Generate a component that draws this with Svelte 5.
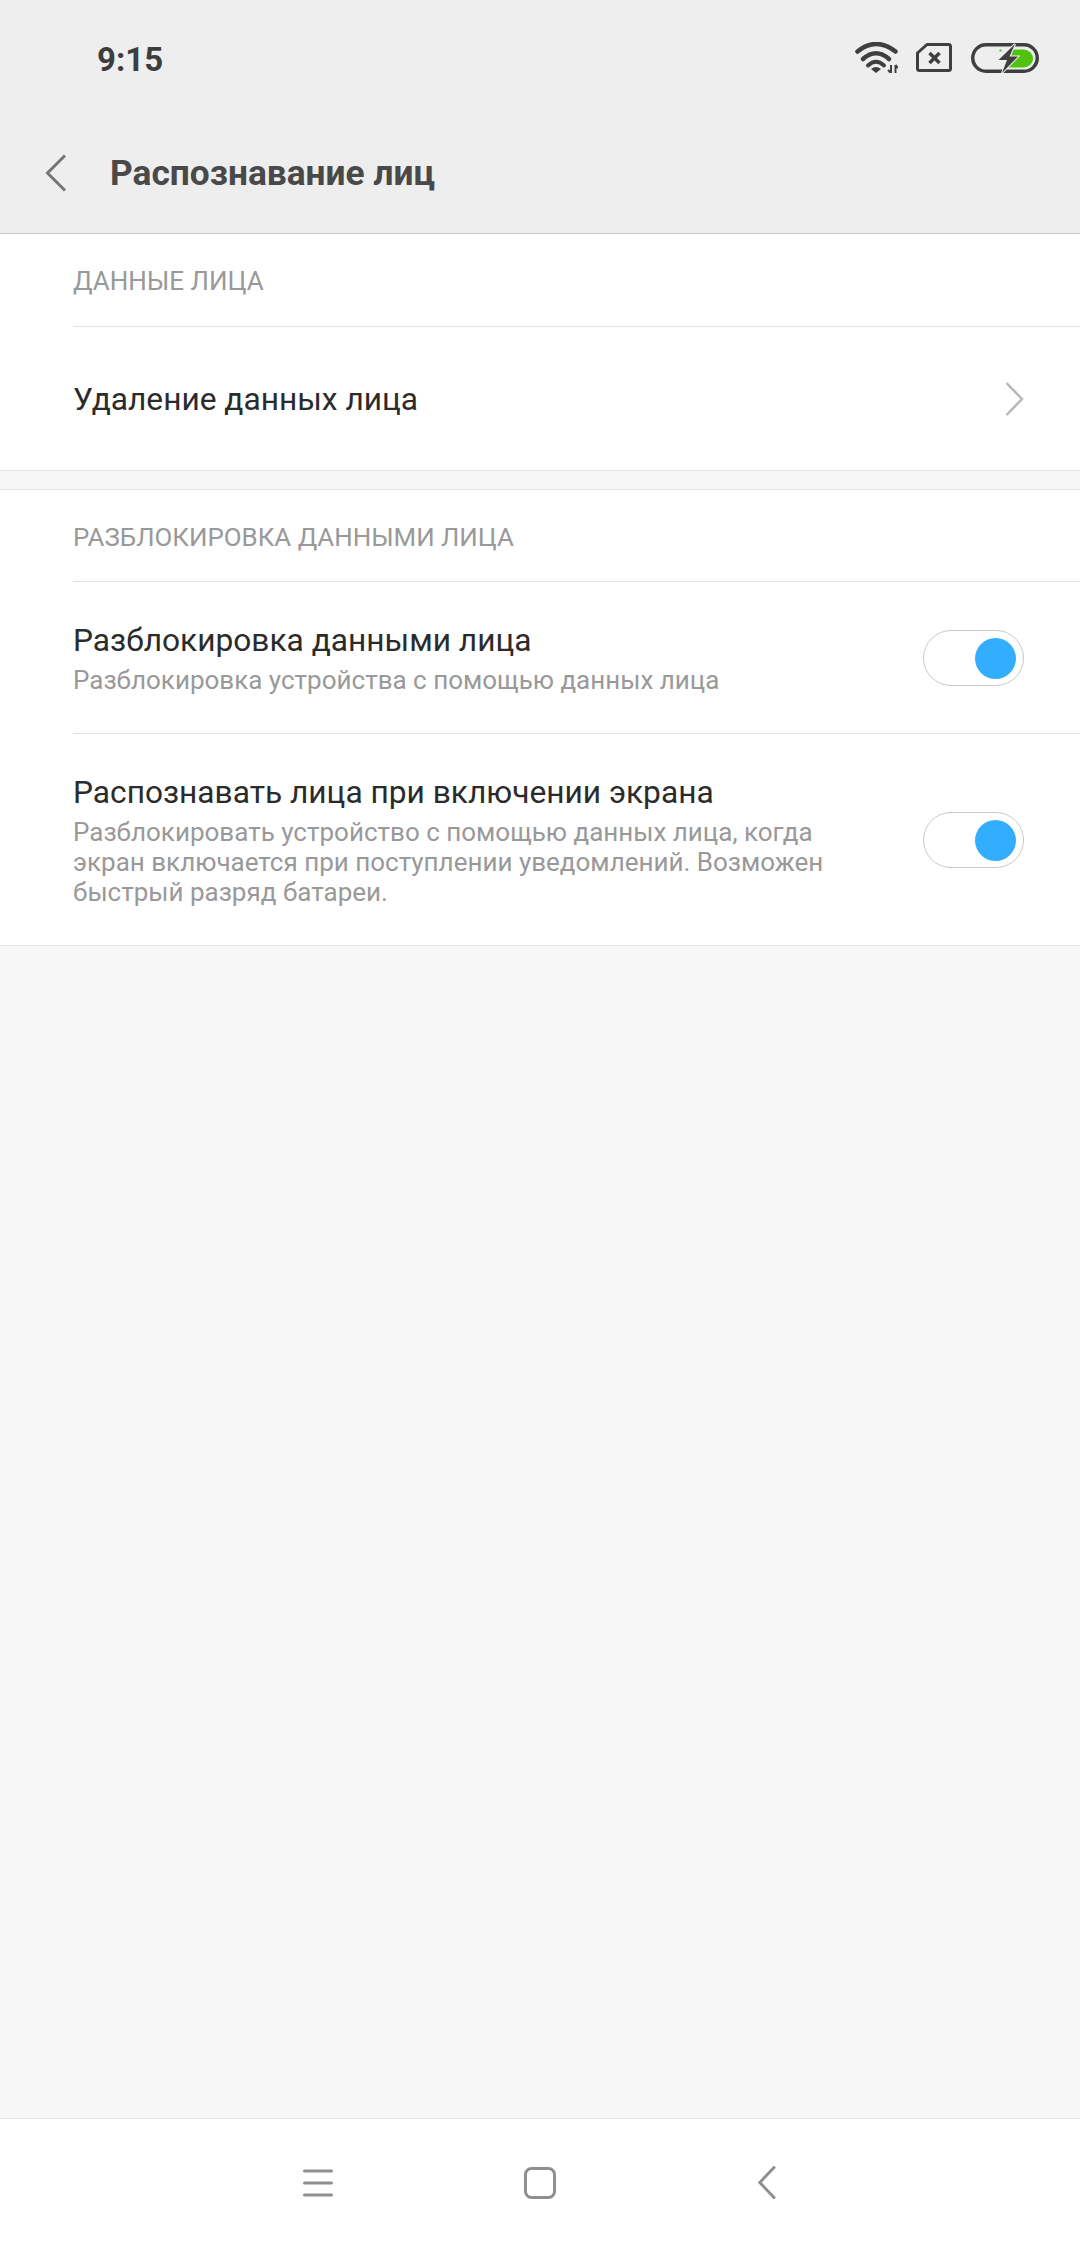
<script>
	const rows = [
		{
			title: 'Разблокировка данными лица',
			lines: ['Разблокировка устройства с помощью данных лица']
		},
		{
			title: 'Распознавать лица при включении экрана',
			lines: [
				'Разблокировать устройство с помощью данных лица, когда',
				'экран включается при поступлении уведомлений. Возможен',
				'быстрый разряд батареи.'
			]
		}
	];
</script>

<div class="page">
	<header>
		<div class="status">
			<span class="time">9:15</span>
			<div class="status-icons">
				<svg class="wifi" width="43" height="31" viewBox="0 0 43 31">
					<path d="M2.500 9.500Q21 -5.500 40.500 9.500" fill="none" stroke="#3f3f3f" stroke-width="4.500" stroke-linecap="round" />
					<path d="M8 17Q21 5.500 34 17" fill="none" stroke="#3f3f3f" stroke-width="4.500" stroke-linecap="round" />
					<path d="M13 23.500Q21 16 29 23.500" fill="none" stroke="#3f3f3f" stroke-width="4" stroke-linecap="round" />
					<path d="M16 27Q21 23 26 27L21 31Z" fill="#3f3f3f" />
					<path d="M36 23V31M33 28L36 31M40.500 23V31M40.500 23L43 26" fill="none" stroke="#3f3f3f" stroke-width="2" />
				</svg>
				<svg class="sim" width="36" height="29" viewBox="0 0 36 29">
					<path d="M11 1.500H32.500C33.600 1.500 34.500 2.400 34.500 3.500V25.500C34.500 26.600 33.600 27.500 32.500 27.500H3.500C2.400 27.500 1.500 26.600 1.500 25.500V10Z" fill="none" stroke="#3f3f3f" stroke-width="3" stroke-linejoin="round" />
					<path d="M13.500 10L23.500 20M23.500 10L13.500 20" fill="none" stroke="#3f3f3f" stroke-width="3.500" />
				</svg>
				<svg class="battery" width="68" height="30" viewBox="0 0 68 30">
					<rect x="1.750" y="1.750" width="64.500" height="26.500" rx="13.250" fill="none" stroke="#3f3f3f" stroke-width="3.500" />
					<path d="M42 6.600H52C58 6.600 62 11 62 15.600C62 20 58 24.600 52 24.600H37Z" fill="#4fc30f" />
					<rect x="28.500" y="6.500" width="2" height="2" fill="#4fc30f" />
					<path d="M44 1L27.500 17H36L31 30L47 13.500H38.500Z" fill="#3f3f3f" stroke="#eeeeee" stroke-width="2" paint-order="stroke" />
				</svg>
			</div>
		</div>
		<div class="toolbar">
			<svg class="back" width="22" height="38" viewBox="0 0 22 38">
				<path d="M20 1.500L2.500 19L20 36.500" fill="none" stroke="#757575" stroke-width="3" />
			</svg>
			<h1>Распознавание лиц</h1>
		</div>
	</header>

	<section class="first">
		<div class="label">ДАННЫЕ ЛИЦА</div>
		<div class="link-row">
			<span class="row-title">Удаление данных лица</span>
			<svg width="19" height="34" viewBox="0 0 19 34">
				<path d="M1.500 1L17 17L1.500 33" fill="none" stroke="#b8b8b8" stroke-width="2.500" />
			</svg>
		</div>
	</section>

	<section class="second">
		<div class="label">РАЗБЛОКИРОВКА ДАННЫМИ ЛИЦА</div>
		{#each rows as row}
			<div class="switch-row">
				<div class="row-text">
					<div class="row-title">{row.title}</div>
					<div class="row-subs">
						{#each row.lines as line}
							<div class="row-sub">{line}</div>
						{/each}
					</div>
				</div>
				<div class="toggle"><span class="knob"></span></div>
			</div>
		{/each}
	</section>

	<div class="spacer"></div>

	<nav>
		<svg width="30" height="28" viewBox="0 0 30 28">
			<path d="M1.500 2H28.500M1.500 14H28.500M1.500 26H28.500" fill="none" stroke="#8f8f8f" stroke-width="3" stroke-linecap="round" />
		</svg>
		<svg class="home" width="32" height="32" viewBox="0 0 32 32">
			<rect x="1.500" y="1.500" width="29" height="29" rx="6" fill="none" stroke="#8f8f8f" stroke-width="3" />
		</svg>
		<svg class="nav-back" width="18" height="33" viewBox="0 0 18 33">
			<path d="M16 1.500L1.800 16.500L16 31.500" fill="none" stroke="#8f8f8f" stroke-width="3" stroke-linecap="round" />
		</svg>
	</nav>
</div>

<style>
	:global(body) {
		margin: 0;
		background: #f7f7f7;
	}
	.page {
		width: 1080px;
		height: 2248px;
		display: flex;
		flex-direction: column;
		font-family: Roboto, "Noto Sans", sans-serif;
		background: #f7f7f7;
	}
	header {
		height: 233px;
		background: #eeeeee;
		border-bottom: 1px solid #c9c9c9;
		flex: none;
	}
	.status {
		height: 118px;
		display: flex;
		align-items: center;
		justify-content: space-between;
		padding: 0 41px 0 97px;
	}
	.time {
		font-size: 33px;
		font-weight: 700;
		color: #3d3d3d;
	}
	.status-icons {
		display: flex;
		align-items: center;
		gap: 18px;
		margin-bottom: 3px;
	}
	.battery {
		margin-left: 1px;
	}
	.toolbar {
		display: flex;
		align-items: center;
		gap: 43px;
		padding: 0 0 0 45px;
		height: 110px;
	}
	h1 {
		margin: 0;
		font-size: 35.3px;
		font-weight: 700;
		color: #494949;
	}
	section {
		background: #fff;
		border-bottom: 1px solid #e6e6e6;
		padding-left: 73px;
		flex: none;
	}
	section.first {
		margin-bottom: 18px;
	}
	section.second {
		border-top: 1px solid #e6e6e6;
	}
	.label {
		height: 92px;
		line-height: 94px;
		font-size: 26px;
		color: #999;
		border-bottom: 1px solid #e2e2e2;
	}
	.second .label {
		height: 91px;
		font-size: 25.9px;
	}
	.link-row {
		height: 143px;
		display: flex;
		align-items: center;
		justify-content: space-between;
		padding-right: 56px;
	}
	.link-row .row-title {
		padding-top: 2px;
	}
	.row-title {
		font-size: 31.7px;
		line-height: 40px;
		color: #2b2b2b;
	}
	.switch-row {
		display: flex;
		align-items: center;
		justify-content: space-between;
		padding: 39px 56px 38px 0;
		border-bottom: 1px solid #e2e2e2;
	}
	.switch-row:last-child {
		border-bottom: 0;
	}
	.row-subs {
		margin-top: 4px;
	}
	.row-sub {
		font-size: 26px;
		line-height: 30px;
		color: #999;
	}
	.toggle {
		width: 92px;
		height: 54px;
		border: 1px solid #c8c8c8;
		border-radius: 28px;
		display: flex;
		align-items: center;
		justify-content: flex-end;
		padding-right: 7px;
		flex: none;
	}
	.knob {
		width: 41px;
		height: 41px;
		border-radius: 50%;
		background: #33aeff;
	}
	.spacer {
		flex: 1;
	}
	nav {
		height: 127px;
		padding-bottom: 2px;
		flex: none;
		background: #fff;
		border-top: 1px solid #e6e6e6;
		display: flex;
		align-items: center;
		padding-left: 303px;
	}
	.home {
		margin-left: 191px;
	}
	.nav-back {
		margin-left: 202px;
	}
</style>
